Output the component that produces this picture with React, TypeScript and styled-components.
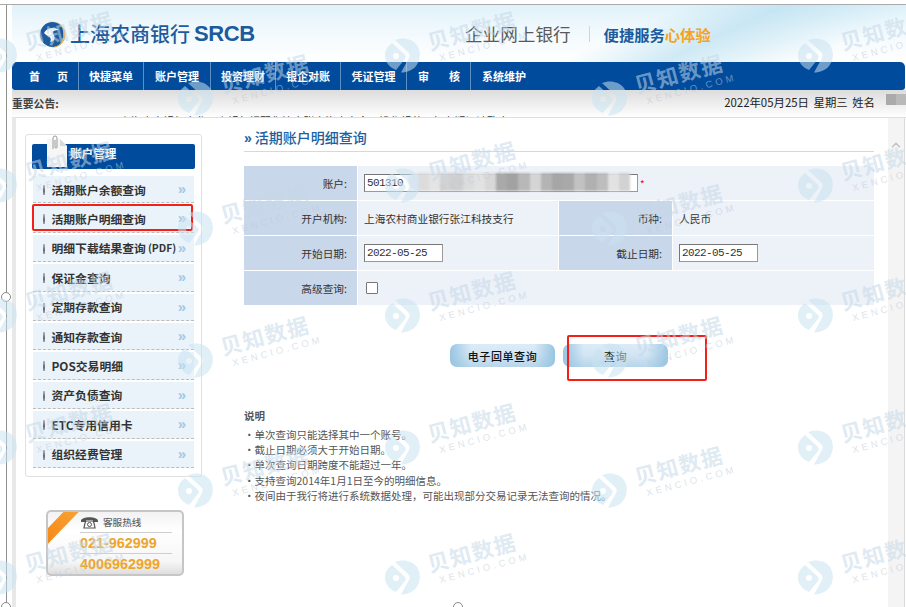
import styled, { createGlobalStyle } from 'styled-components';
import { ChevronUp } from 'lucide-react';

const FONT = '"Noto Sans CJK SC", "Liberation Sans", sans-serif';

const GlobalStyle = createGlobalStyle`
    html, body {
        margin: 0;
        padding: 0;
        background: #fff;
    }
    body {
        font-family: ${FONT};
    }
`;

const Frame = styled.div`
    position: relative;
    width: 906px;
    height: 607px;
    overflow: hidden;
    background: #fff;
    padding-top: 4px;
    box-sizing: border-box;
`;

const Shell = styled.div`
    display: flex;
    height: 603px;
    border-top: 1px solid #aaa;
`;

const Rail = styled.div`
    position: relative;
    flex: none;
    width: 7px;
    margin-right: 5px;
    border-right: 1px solid #8e8e8e;
    box-sizing: border-box;
`;

const RailHandle = styled.span`
    position: absolute;
    left: 1px;
    top: ${(p: { $top: number }) => p.$top}px;
    width: 10px;
    height: 10px;
    border-radius: 50%;
    border: 1px solid #888;
    background: #fff;
    box-sizing: border-box;
`;

const BottomHandle = styled.span`
    position: absolute;
    left: 453px;
    top: 602px;
    width: 10px;
    height: 10px;
    border-radius: 50%;
    border: 1px solid #888;
    background: #fff;
    box-sizing: border-box;
`;

const Column = styled.div`
    flex: 1;
    display: flex;
    flex-direction: column;
    min-width: 0;
`;

const Header = styled.div`
    flex: none;
    height: 57px;
    display: flex;
    align-items: center;
    padding: 0 0 0 27px;
    background:
        linear-gradient(155deg, transparent 66%, rgba(178, 220, 238, .6) 76%, transparent 90%),
        linear-gradient(to bottom, #e0f2fa 0%, #f1f9fd 45%, #fff 100%);
`;

const Logo = styled.div`
    display: flex;
    align-items: center;
    width: 216px;
    margin-top: 1px;
    color: #1c5b9c;
`;

const LogoCn = styled.span`
    font-size: 20px;
    font-weight: 500;
    line-height: 24px;
    margin-left: 4px;
    white-space: nowrap;
`;

const LogoEn = styled.span`
    font-family: "Liberation Sans", sans-serif;
    font-size: 22px;
    font-weight: 700;
    line-height: 24px;
    margin-left: 4px;
    letter-spacing: -.4px;
`;

const PortalName = styled.span`
    margin-left: 210px;
    font-size: 17.6px;
    line-height: 24px;
    color: #595959;
    white-space: nowrap;
`;

const HeaderDivider = styled.span`
    width: 1px;
    height: 16px;
    margin: 0 14px 0 18px;
    background: #cfd6da;
`;

const Slogan = styled.span`
    font-size: 15.3px;
    font-weight: 700;
    color: #1c5b9c;
    white-space: nowrap;
`;

const SloganAccent = styled.span`
    color: #f5a31c;
`;

const Nav = styled.nav`
    flex: none;
    height: 28px;
    display: flex;
    background: #014b9c;
    border-radius: 5px 5px 3px 3px;
    margin-right: 1px;
`;

const NavItem = styled.a<{ $lead?: number; $width: number }>`
    display: flex;
    align-items: center;
    justify-content: ${(p) => (p.$lead ? 'space-between' : 'center')};
    width: ${(p) => p.$width}px;
    box-sizing: border-box;
    padding: ${(p) => (p.$lead ? `0 10px 0 ${p.$lead}px` : '0')};
    border-right: 1px solid #5d8fc4;
    color: #fff;
    font-size: 11px;
    font-weight: 700;
    white-space: nowrap;

    &:last-child {
        border-right: 0;
    }
`;

const NoticeBar = styled.div`
    flex: none;
    position: relative;
    height: 27px;
    display: flex;
    justify-content: space-between;
    background: linear-gradient(to bottom, #dcdcdc 0%, #f4f4f4 70%, #fff 100%);
`;

const NoticeLabel = styled.span`
    font-size: 10.8px;
    font-weight: 700;
    line-height: 26px;
    color: #444;
`;

const NoticeTicker = styled.span`
    position: absolute;
    left: 108px;
    top: 23px;
    height: 4px;
    overflow: hidden;
    font-size: 10.8px;
    line-height: 16px;
    color: #333;
    white-space: nowrap;
`;

const NoticeDate = styled.span`
    font-size: 11.4px;
    line-height: 24px;
    color: #222;
    margin-right: 11px;
    margin-left: auto;
    word-spacing: 2px;
    white-space: nowrap;
`;

const NoticeMask = styled.span`
    width: 20px;
    height: 11px;
    margin-top: 4px;
    background: linear-gradient(to right, #aaa 0 50%, #b9b9b9 50% 100%);
`;

const Main = styled.div`
    flex: 1;
    display: flex;
    min-height: 0;
    margin-left: 0;
    border-top: 1px solid #dedede;
    border-left: 4px solid #e8e8e8;
`;

const SideColumn = styled.aside`
    flex: none;
    width: 186px;
    padding: 16px 0 0 9px;
    box-sizing: border-box;
`;

const SideBox = styled.div`
    width: 177px;
    height: 343px;
    box-sizing: border-box;
    border: 1px solid #e0e0e0;
    border-radius: 3px;
    padding: 9px 6px 0;
`;

const SideTitle = styled.div`
    position: relative;
    height: 25px;
    box-sizing: border-box;
    display: flex;
    align-items: center;
    padding: 0 0 7px 38px;
    margin-bottom: 7px;
    background: #014b9c;
    border-radius: 2px;
    color: #fff;
    font-size: 11.6px;
    font-weight: 700;
`;

const PaperClip = styled.svg`
    position: absolute;
    left: 15px;
    top: -9px;
`;

const SideList = styled.ul`
    list-style: none;
    margin: 0;
    padding: 0 1px;
`;

const SideItem = styled.li`
    position: relative;
    display: flex;
    align-items: center;
    height: 27.4px;
    margin-bottom: 2px;
    padding-left: 18.5px;
    box-sizing: border-box;
    background: #ebf3fa;
    border-bottom: 1px dashed #bcbcbc;
    color: #333;
    font-size: 11.8px;
    font-weight: 700;
    white-space: nowrap;
`;

const ItemTag = styled.span`
    margin-left: 2px;
    font-size: 10.4px;
`;

const ItemMark = styled.span`
    position: absolute;
    left: 10px;
    top: 9px;
    width: 2px;
    height: 10px;
    background: linear-gradient(to bottom, #bbb, #667 60%, #aaa);
`;

const ItemArrow = styled.span`
    position: absolute;
    right: 8px;
    top: 4px;
    color: #a4c8e4;
    font-family: "Liberation Sans", sans-serif;
    font-size: 15px;
    line-height: 18px;
    font-weight: 700;
`;

const RedBox = styled.span`
    position: absolute;
    box-sizing: border-box;
    border: 2.5px solid #f61f18;
    border-radius: 2px;
`;

const ItemHighlight = styled(RedBox)`
    left: -1px;
    top: -1px;
    width: 161px;
    height: 27px;
`;

const Hotline = styled.div`
    position: relative;
    overflow: hidden;
    width: 138px;
    height: 66px;
    margin: 33px 0 0 21px;
    box-sizing: border-box;
    padding-left: 32px;
    border: 2px solid #c6c6c6;
    border-radius: 5px;
    background: linear-gradient(to bottom, #f2f2f2, #fff 30%, #f6f6f6 80%, #dedede);
`;

const HotlineRibbon = styled.span`
    position: absolute;
    left: -26px;
    top: 8px;
    width: 72px;
    height: 11px;
    background: linear-gradient(to right, #f57f0c, #f9a83a);
    transform: rotate(-46deg);
`;

const HotlineHead = styled.div`
    display: flex;
    align-items: center;
    height: 20px;
    margin-right: 10px;
    border-bottom: 1px solid #cfcfcf;
    color: #666;
    font-size: 9.6px;
    font-weight: 500;
`;

const PhoneIcon = styled.svg`
    margin-right: 4px;
    flex: none;
`;

const HotlineNumber = styled.div`
    height: 20px;
    margin-right: 10px;
    line-height: 20px;
    color: #efa52a;
    font-family: "Liberation Sans", sans-serif;
    font-size: 14.4px;
    font-weight: 700;
    white-space: nowrap;

    & + & {
        border-top: 1px solid #cfcfcf;
    }
`;

const Content = styled.section`
    flex: none;
    width: 630px;
    margin-left: 42px;
`;

const PageTitle = styled.h1`
    height: 34px;
    margin: 0 0 14px;
    box-sizing: border-box;
    padding-top: 9px;
    border-bottom: 1px solid #cadde6;
    color: #205f9f;
    font-size: 14px;
    font-weight: 500;
    line-height: 20px;
    white-space: nowrap;
`;

const TitleMark = styled.span`
    font-family: "Liberation Sans", sans-serif;
    font-weight: 700;
    margin-right: 3px;
`;

const FormGrid = styled.div`
    display: grid;
    grid-template-columns: 113px 200px 113px 1fr;
    grid-auto-rows: 34px;
    gap: 1px;
    font-size: 10.7px;
    color: #333;
`;

const FieldLabel = styled.div`
    display: flex;
    align-items: center;
    justify-content: flex-end;
    padding-right: 10px;
    background: #c9d7ea;
`;

const FieldValue = styled.div<{ $span?: number }>`
    position: relative;
    display: flex;
    align-items: center;
    padding-left: 6px;
    background: #edf1f8;
    grid-column: span ${(p) => p.$span ?? 1};
`;

const TextInput = styled.input<{ $wide?: boolean }>`
    width: ${(p) => (p.$wide ? 274 : 79)}px;
    height: 18px;
    box-sizing: border-box;
    margin: 0;
    padding: 0 1px 0 2px;
    border: 1px solid #9a9a9a;
    border-top-color: #777;
    border-left-color: #777;
    border-radius: 0;
    background: #fff;
    color: #333;
    font-family: "Liberation Mono", monospace;
    font-size: 11px;
    letter-spacing: -.6px;
    outline: none;
`;

const Required = styled.span`
    margin-left: 2px;
    color: #f00;
    font-size: 10px;
`;

const Mosaic = styled.div`
    position: absolute;
    left: 50px;
    top: 7px;
    display: flex;
    width: 222px;
    height: 18px;
    padding-left: 10px;
    box-sizing: border-box;
    background: #e7e9ee;
    border-radius: 9px 4px 12px 12px;
    filter: blur(1px);
`;

const MosaicCell = styled.span<{ $shade: string }>`
    flex: 1;
    background: ${(p) => p.$shade};
`;

const CheckBox = styled.span`
    width: 12px;
    height: 12px;
    margin-left: 2px;
    box-sizing: border-box;
    border: 1px solid #777;
    border-radius: 1px;
    background: #fff;
`;

const ButtonRow = styled.div`
    display: flex;
    gap: 8px;
    margin: 39px 0 0 206px;
`;

const ActionSlot = styled.div`
    position: relative;
`;

const ActionButton = styled.button<{ $loose?: boolean }>`
    display: block;
    width: 105px;
    height: 23px;
    margin: 0;
    padding: 0;
    border: 0;
    border-radius: 7px;
    background:
        linear-gradient(to right, rgba(146, 194, 224, .9), rgba(255, 255, 255, 0) 20%, rgba(255, 255, 255, 0) 80%, rgba(146, 194, 224, .9)),
        linear-gradient(to bottom, #dcebf7 0%, #d3e5f4 45%, #b8d6ea 100%);
    color: #111;
    font-family: ${FONT};
    font-size: 11px;
    font-weight: ${(p) => (p.$loose ? 400 : 500)};
    letter-spacing: .6px;
`;

const ButtonHighlight = styled(RedBox)`
    left: 4px;
    top: -9px;
    width: 140px;
    height: 46px;
`;

const Notes = styled.div`
    margin-top: 41px;
    color: #555;
    font-size: 10.5px;
    line-height: 15.2px;
`;

const NotesTitle = styled.div`
    height: 19px;
    font-weight: 700;
`;

const NoteLine = styled.div`
    white-space: nowrap;
`;

const ScrollTrack = styled.div`
    flex: none;
    width: 17px;
    margin-left: 14px;
    padding-top: 20px;
    box-sizing: border-box;
    display: flex;
    justify-content: center;
    align-items: flex-start;
    background: #f4f4f4;
    border-right: 1px solid #dadada;
    color: #c2c2c2;
`;

const WatermarkLayer = styled.div`
    position: absolute;
    inset: 0;
    overflow: hidden;
    pointer-events: none;
`;

const Watermark = styled.div`
    position: absolute;
    width: 140px;
    height: 40px;
`;

const WatermarkText = styled.div`
    position: absolute;
    left: 31px;
    top: -27px;
    transform: rotate(-15deg);
    transform-origin: left bottom;
    color: rgba(196, 216, 232, .55);
    white-space: nowrap;
`;

const WatermarkCn = styled.div`
    font-size: 21.5px;
    line-height: 25px;
    font-weight: 700;
    letter-spacing: 1.2px;
`;

const WatermarkEn = styled.div`
    margin: 1px 0 0 7px;
    font-family: "Liberation Sans", sans-serif;
    font-size: 9.5px;
    line-height: 11px;
    letter-spacing: 3.2px;
    color: rgba(190, 203, 216, .55);
`;

const MENU: { label: string; tag?: string }[] = [
    { label: '活期账户余额查询' },
    { label: '活期账户明细查询' },
    { label: '明细下载结果查询', tag: '(PDF)' },
    { label: '保证金查询' },
    { label: '定期存款查询' },
    { label: '通知存款查询' },
    { label: 'POS交易明细' },
    { label: '资产负债查询' },
    { label: 'ETC专用信用卡' },
    { label: '组织经费管理' },
];

const NAV = [
    { label: '首', tail: '页', lead: 17, width: 67 },
    { label: '快捷菜单', width: 65 },
    { label: '账户管理', width: 67 },
    { label: '投资理财', width: 65 },
    { label: '银企对账', width: 65 },
    { label: '凭证管理', width: 66 },
    { label: '审', tail: '核', lead: 11, width: 64 },
    { label: '系统维护', width: 66 },
];

const NOTES = [
    '单次查询只能选择其中一个账号。',
    '截止日期必须大于开始日期。',
    '单次查询日期跨度不能超过一年。',
    '支持查询2014年1月1日至今的明细信息。',
    '夜间由于我行将进行系统数据处理，可能出现部分交易记录无法查询的情况。',
];

const MOSAIC = ['#dcdcdc', '#e4e4e4', '#d2d2d2', '#cfcfcf', '#dcdcdc', '#e2e2e2', '#d8d8d8', '#a9a9a9', '#a2a2a2', '#b8b8b8', '#d5d5d5', '#b4b4b4', '#a6a6a6', '#a9a9a9', '#c2c2c2', '#b0b0b0', '#bdbdbd', '#e2e2e2', '#d2d2d2'];

// staggered grid of the stamp, centres read off the reference
const STAMPS = [
    ...[55, 185, 315, 447, 577].flatMap((y) => [0, 403, 816].map((x) => ({ x, y }))),
    ...[98, 228, 360, 490].flatMap((y) => [196, 610].map((x) => ({ x, y }))),
];

function StampIcon() {
    return (
        <svg width="36" height="36" viewBox="0 0 36 36" style={{ position: 'absolute', left: -18, top: -18 }}>
            <path
                fill="rgba(200, 225, 240, .55)"
                fillRule="evenodd"
                d="M10 3C17 0 27 1 32 8C36 14 36 23 31 29C28 33 22 35.5 16 35.5L24 21C25 19 25 17 23 15ZM7 6L19 17C21 19 21 20 20 22L11 33C4 30 0 25 0 18C0 13 3 9 7 6ZM11 16A3 3 0 1 0 11 22A3 3 0 1 0 11 16Z"
            />
        </svg>
    );
}

export default function App() {
    return (
        <Frame>
            <GlobalStyle />
            <Shell>
                <Rail>
                    <RailHandle $top={287} />
                    <RailHandle $top={597} />
                </Rail>
                <Column>
                    <Header>
                        <Logo>
                            <svg width="27" height="27" viewBox="0 0 27 27" style={{ flex: 'none' }}>
                                <circle cx="13.5" cy="13.5" r="12.5" fill="#1c5b9c" />
                                <path d="M8 2A13 13 0 0 1 26.5 13.5A13 13 0 0 1 9 25.7A11.5 11.5 0 0 0 24 13.5A11 11 0 0 0 8 2Z" fill="#f3a11f" />
                                <path d="M5 12C8 6 16 6 20 9C16 9 13 10 14 12.5C16 16 17 20 11 21C13 18 11 16 9 15C7 14 6 13 5 12Z" fill="#fff" />
                            </svg>
                            <LogoCn>上海农商银行</LogoCn>
                            <LogoEn>SRCB</LogoEn>
                        </Logo>
                        <PortalName>企业网上银行</PortalName>
                        <HeaderDivider />
                        <Slogan>
                            便捷服务<SloganAccent>心体验</SloganAccent>
                        </Slogan>
                    </Header>
                    <Nav>
                        {NAV.map((item) => (
                            <NavItem key={item.label} $lead={item.lead} $width={item.width}>
                                <span>{item.label}</span>
                                {item.tail && <span>{item.tail}</span>}
                            </NavItem>
                        ))}
                    </Nav>
                    <NoticeBar>
                        <NoticeLabel>重要公告:</NoticeLabel>
                        <NoticeTicker>上海农商银行企业网上银行提醒您注意账户资金安全及操作规范，如有疑问请致电 021-962999</NoticeTicker>
                        <NoticeDate>2022年05月25日 星期三 姓名</NoticeDate>
                        <NoticeMask />
                    </NoticeBar>
                    <Main>
                        <SideColumn>
                            <SideBox>
                                <SideTitle>
                                    <PaperClip width="20" height="32" viewBox="0 0 20 32">
                                        <path d="M0 4H13L20 11V32H0Z" fill="#f6f6f6" />
                                        <path d="M13 4V11H20Z" fill="#d9d9d9" />
                                        <path d="M6 14V3A2 2 0 0 1 10 3V12A1 1 0 0 1 8 12V5" fill="none" stroke="#9a9a9a" strokeWidth="1" />
                                    </PaperClip>
                                    账户管理
                                </SideTitle>
                                <SideList>
                                    {MENU.map(({ label, tag }, i) => (
                                        <SideItem key={label}>
                                            <ItemMark />
                                            {label}
                                            {tag && <ItemTag>{tag}</ItemTag>}
                                            <ItemArrow>»</ItemArrow>
                                            {i === 1 && <ItemHighlight />}
                                        </SideItem>
                                    ))}
                                </SideList>
                            </SideBox>
                            <Hotline>
                                <HotlineRibbon />
                                <HotlineHead>
                                    <PhoneIcon width="19" height="14" viewBox="0 0 19 14">
                                        <path d="M1 6C1 1 18 1 18 6V7H13V5H6V7H1Z" fill="#555" />
                                        <path d="M5 8L6 6H13L14 8L15 13H4Z" fill="none" stroke="#555" strokeWidth="1.2" />
                                        <circle cx="9.5" cy="9.5" r="2" fill="none" stroke="#555" />
                                    </PhoneIcon>
                                    客服热线
                                </HotlineHead>
                                <HotlineNumber>021-962999</HotlineNumber>
                                <HotlineNumber>4006962999</HotlineNumber>
                            </Hotline>
                        </SideColumn>
                        <Content>
                            <PageTitle>
                                <TitleMark>»</TitleMark>活期账户明细查询
                            </PageTitle>
                            <FormGrid>
                                <FieldLabel>账户:</FieldLabel>
                                <FieldValue $span={3}>
                                    <TextInput $wide readOnly value="501310" />
                                    <Required>*</Required>
                                    <Mosaic>
                                        {MOSAIC.map((shade, i) => (
                                            <MosaicCell key={i} $shade={shade} />
                                        ))}
                                    </Mosaic>
                                </FieldValue>
                                <FieldLabel>开户机构:</FieldLabel>
                                <FieldValue>上海农村商业银行张江科技支行</FieldValue>
                                <FieldLabel>币种:</FieldLabel>
                                <FieldValue>人民币</FieldValue>
                                <FieldLabel>开始日期:</FieldLabel>
                                <FieldValue>
                                    <TextInput readOnly value="2022-05-25" />
                                </FieldValue>
                                <FieldLabel>截止日期:</FieldLabel>
                                <FieldValue>
                                    <TextInput readOnly value="2022-05-25" />
                                </FieldValue>
                                <FieldLabel>高级查询:</FieldLabel>
                                <FieldValue $span={3}>
                                    <CheckBox />
                                </FieldValue>
                            </FormGrid>
                            <ButtonRow>
                                <ActionSlot>
                                    <ActionButton type="button">电子回单查询</ActionButton>
                                </ActionSlot>
                                <ActionSlot>
                                    <ActionButton type="button" $loose>查询</ActionButton>
                                    <ButtonHighlight />
                                </ActionSlot>
                            </ButtonRow>
                            <Notes>
                                <NotesTitle>说明</NotesTitle>
                                {NOTES.map((line) => (
                                    <NoteLine key={line}>·{line}</NoteLine>
                                ))}
                            </Notes>
                        </Content>
                        <ScrollTrack>
                            <ChevronUp size={14} strokeWidth={2.5} />
                        </ScrollTrack>
                    </Main>
                </Column>
            </Shell>
            <BottomHandle />
            <WatermarkLayer>
                {STAMPS.map(({ x, y }) => (
                    <Watermark key={`${x}-${y}`} style={{ left: x, top: y }}>
                        <StampIcon />
                        <WatermarkText>
                            <WatermarkCn>贝知数据</WatermarkCn>
                            <WatermarkEn>XENCIO.COM</WatermarkEn>
                        </WatermarkText>
                    </Watermark>
                ))}
            </WatermarkLayer>
        </Frame>
    );
}
